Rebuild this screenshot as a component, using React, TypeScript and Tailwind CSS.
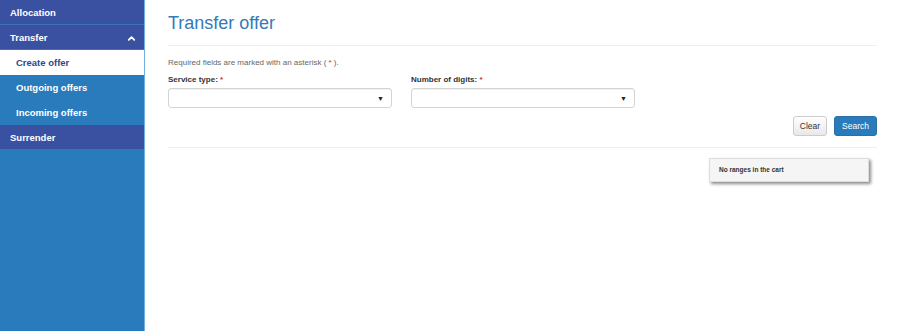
import { ChevronUp } from 'lucide-react';

const SideItem = ({
  label,
  variant,
  right,
}: {
  label: string;
  variant: 'main' | 'sub' | 'active';
  right?: React.ReactNode;
}) => {
  const styles = {
    main: 'bg-[#3a51a2] pl-[10px] text-white border-b border-[#3f72b5]',
    sub: 'bg-[#2a7bbb] pl-[16px] text-white',
    active: 'bg-white pl-[16px] text-[#30468f]',
  };
  return (
    <div
      className={`flex h-[25px] items-center justify-between pt-[2px] pr-[7px] text-[9.5px] font-bold ${styles[variant]}`}
    >
      <span>{label}</span>
      {right}
    </div>
  );
};

const SelectBox = () => (
  <div className="flex h-[20px] w-[224px] items-center justify-end rounded-[3px] border border-[#d4d4d4] bg-white pr-[7px] shadow-[inset_0_1px_1px_rgba(0,0,0,0.06)]">
    <span className="text-[7px] leading-none text-[#222]">▼</span>
  </div>
);

const App = () => {
  return (
    <div className="flex h-[331px] w-[900px] bg-white font-['Liberation_Sans',Arial,sans-serif]">
      <aside className="flex w-[145px] flex-col border-r border-[#6fb0dc] bg-[#2a7bbb]">
        <SideItem label="Allocation" variant="main" />
        <SideItem
          label="Transfer"
          variant="main"
          right={<ChevronUp size={11} strokeWidth={4} className="text-white" />}
        />
        <SideItem label="Create offer" variant="active" />
        <SideItem label="Outgoing offers" variant="sub" />
        <SideItem label="Incoming offers" variant="sub" />
        <SideItem label="Surrender" variant="main" />
      </aside>

      <main className="flex-1 pl-[23px] pr-[23px]">
        <h1 className="pt-[10px] text-[18px] font-normal leading-[26px] text-[#337ab7]">
          Transfer offer
        </h1>
        <hr className="mt-[9px] border-[#eeeeee]" />

        <p className="mt-[11px] text-[8px] text-[#666]">
          Required fields are marked with an asterisk ( <span className="text-[#c9302c]">*</span> ).
        </p>

        <div className="mt-[5px] flex gap-[19px]">
          <div className="flex flex-col gap-[2px]">
            <label className="text-[8px] font-bold text-[#333]">
              Service type: <span className="text-[#c9302c]">*</span>
            </label>
            <SelectBox />
          </div>
          <div className="flex flex-col gap-[2px]">
            <label className="text-[8px] font-bold text-[#333]">
              Number of digits: <span className="text-[#c9302c]">*</span>
            </label>
            <SelectBox />
          </div>
        </div>

        <div className="mt-[8px] flex justify-end gap-[7px]">
          <button className="h-[20px] rounded-[3px] border border-[#cccccc] bg-gradient-to-b from-white to-[#e8e8e8] px-[6px] text-[8.5px] text-[#333]">
            Clear
          </button>
          <button className="h-[20px] rounded-[3px] border border-[#2a6fa8] bg-[#2a7bbb] px-[7px] text-[8.5px] text-white">
            Search
          </button>
        </div>

        <hr className="mt-[11px] border-[#eeeeee]" />

        <div className="mt-[10px] flex justify-end pr-[8px]">
          <div className="flex h-[24px] w-[160px] items-center border border-[#dddddd] bg-[#f5f5f5] pl-[9px] text-[6.5px] font-bold text-[#333] shadow-[2px_2px_3px_rgba(0,0,0,0.45)]">
            No ranges in the cart
          </div>
        </div>
      </main>
    </div>
  );
};

export default App;
